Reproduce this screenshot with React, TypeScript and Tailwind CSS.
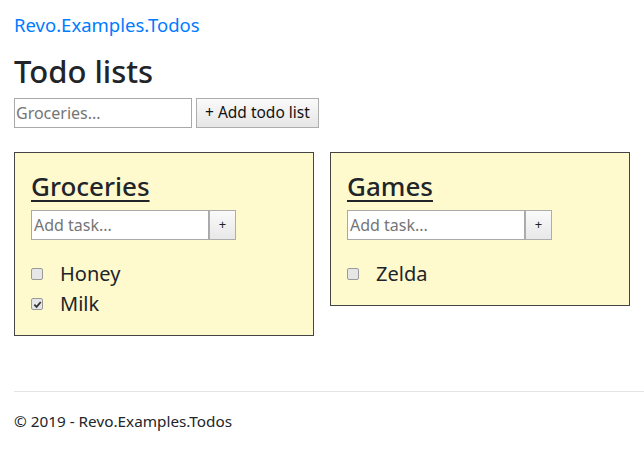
import React from 'react'

type TodoList = { title: string; items: { name: string; done: boolean }[] }

const lists: TodoList[] = [
  { title: 'Groceries', items: [{ name: 'Honey', done: false }, { name: 'Milk', done: true }] },
  { title: 'Games', items: [{ name: 'Zelda', done: false }] },
]

function Check({ done }: { done: boolean }) {
  return (
    <span className="w-[12px] h-[12px] rounded-[2px] border border-[#9a9a9a] bg-[#e6e6e6] flex items-center justify-center shrink-0">
      {done && (
        <svg width="9" height="9" viewBox="0 0 10 10">
          <path d="M1.5 5.2 L4 7.6 L8.6 2.2" fill="none" stroke="#333" strokeWidth="2" />
        </svg>
      )}
    </span>
  )
}

function ListCard({ list }: { list: TodoList }) {
  return (
    <div className="w-[300px] border border-[#444] bg-[#fffacd] px-[16px] pt-[18px] pb-[16px]">
      <h3 className="text-[26px] font-medium underline underline-offset-[4px] decoration-2 leading-[30px] mb-[9px]">
        {list.title}
      </h3>
      <div className="flex h-[30px]">
        <input
          placeholder="Add task..."
          className="w-[178px] h-[30px] border border-[#a9a9a9] bg-white px-[2px] text-[16px] placeholder:text-[#757575] outline-none"
        />
        <button className="w-[27px] h-[30px] border border-[#adadad] bg-gradient-to-b from-[#fafafa] to-[#e8e8e8] text-[13px] text-[#222]">
          +
        </button>
      </div>
      <ul className="mt-[19px]">
        {list.items.map((it) => (
          <li key={it.name} className="flex items-center h-[30px] gap-[17px] text-[20px]">
            <Check done={it.done} />
            <span>{it.name}</span>
          </li>
        ))}
      </ul>
    </div>
  )
}

export default function App() {
  return (
    <div className="min-h-screen bg-white text-[#212529] font-['Noto_Sans',sans-serif]">
      <div className="px-[14px]">
        <div className="pt-[12px] h-[52px]">
          <a href="#" className="text-[18.5px] leading-[26px] text-[#007bff]">
            Revo.Examples.Todos
          </a>
        </div>
        <h2 className="text-[31px] font-medium leading-[38px]">Todo lists</h2>
        <div className="flex gap-[4px] mt-[8px]">
          <input
            placeholder="Groceries..."
            className="w-[178px] h-[30px] border border-[#a9a9a9] bg-white px-[1px] text-[16px] placeholder:text-[#757575] outline-none"
          />
          <button className="h-[30px] px-[8px] border border-[#adadad] bg-gradient-to-b from-[#fafafa] to-[#e6e6e6] text-[15.5px] text-[#111]">
            + Add todo list
          </button>
        </div>
        <div className="flex items-start gap-[16px] mt-[24px]">
          {lists.map((l) => (
            <ListCard key={l.title} list={l} />
          ))}
        </div>
      </div>
      <footer className="mt-[55px] ml-[14px] border-t border-[#e5e5e5] pt-[18px]">
        <p className="text-[15.3px] leading-[22px] text-[#212529]">© 2019 - Revo.Examples.Todos</p>
      </footer>
    </div>
  )
}
